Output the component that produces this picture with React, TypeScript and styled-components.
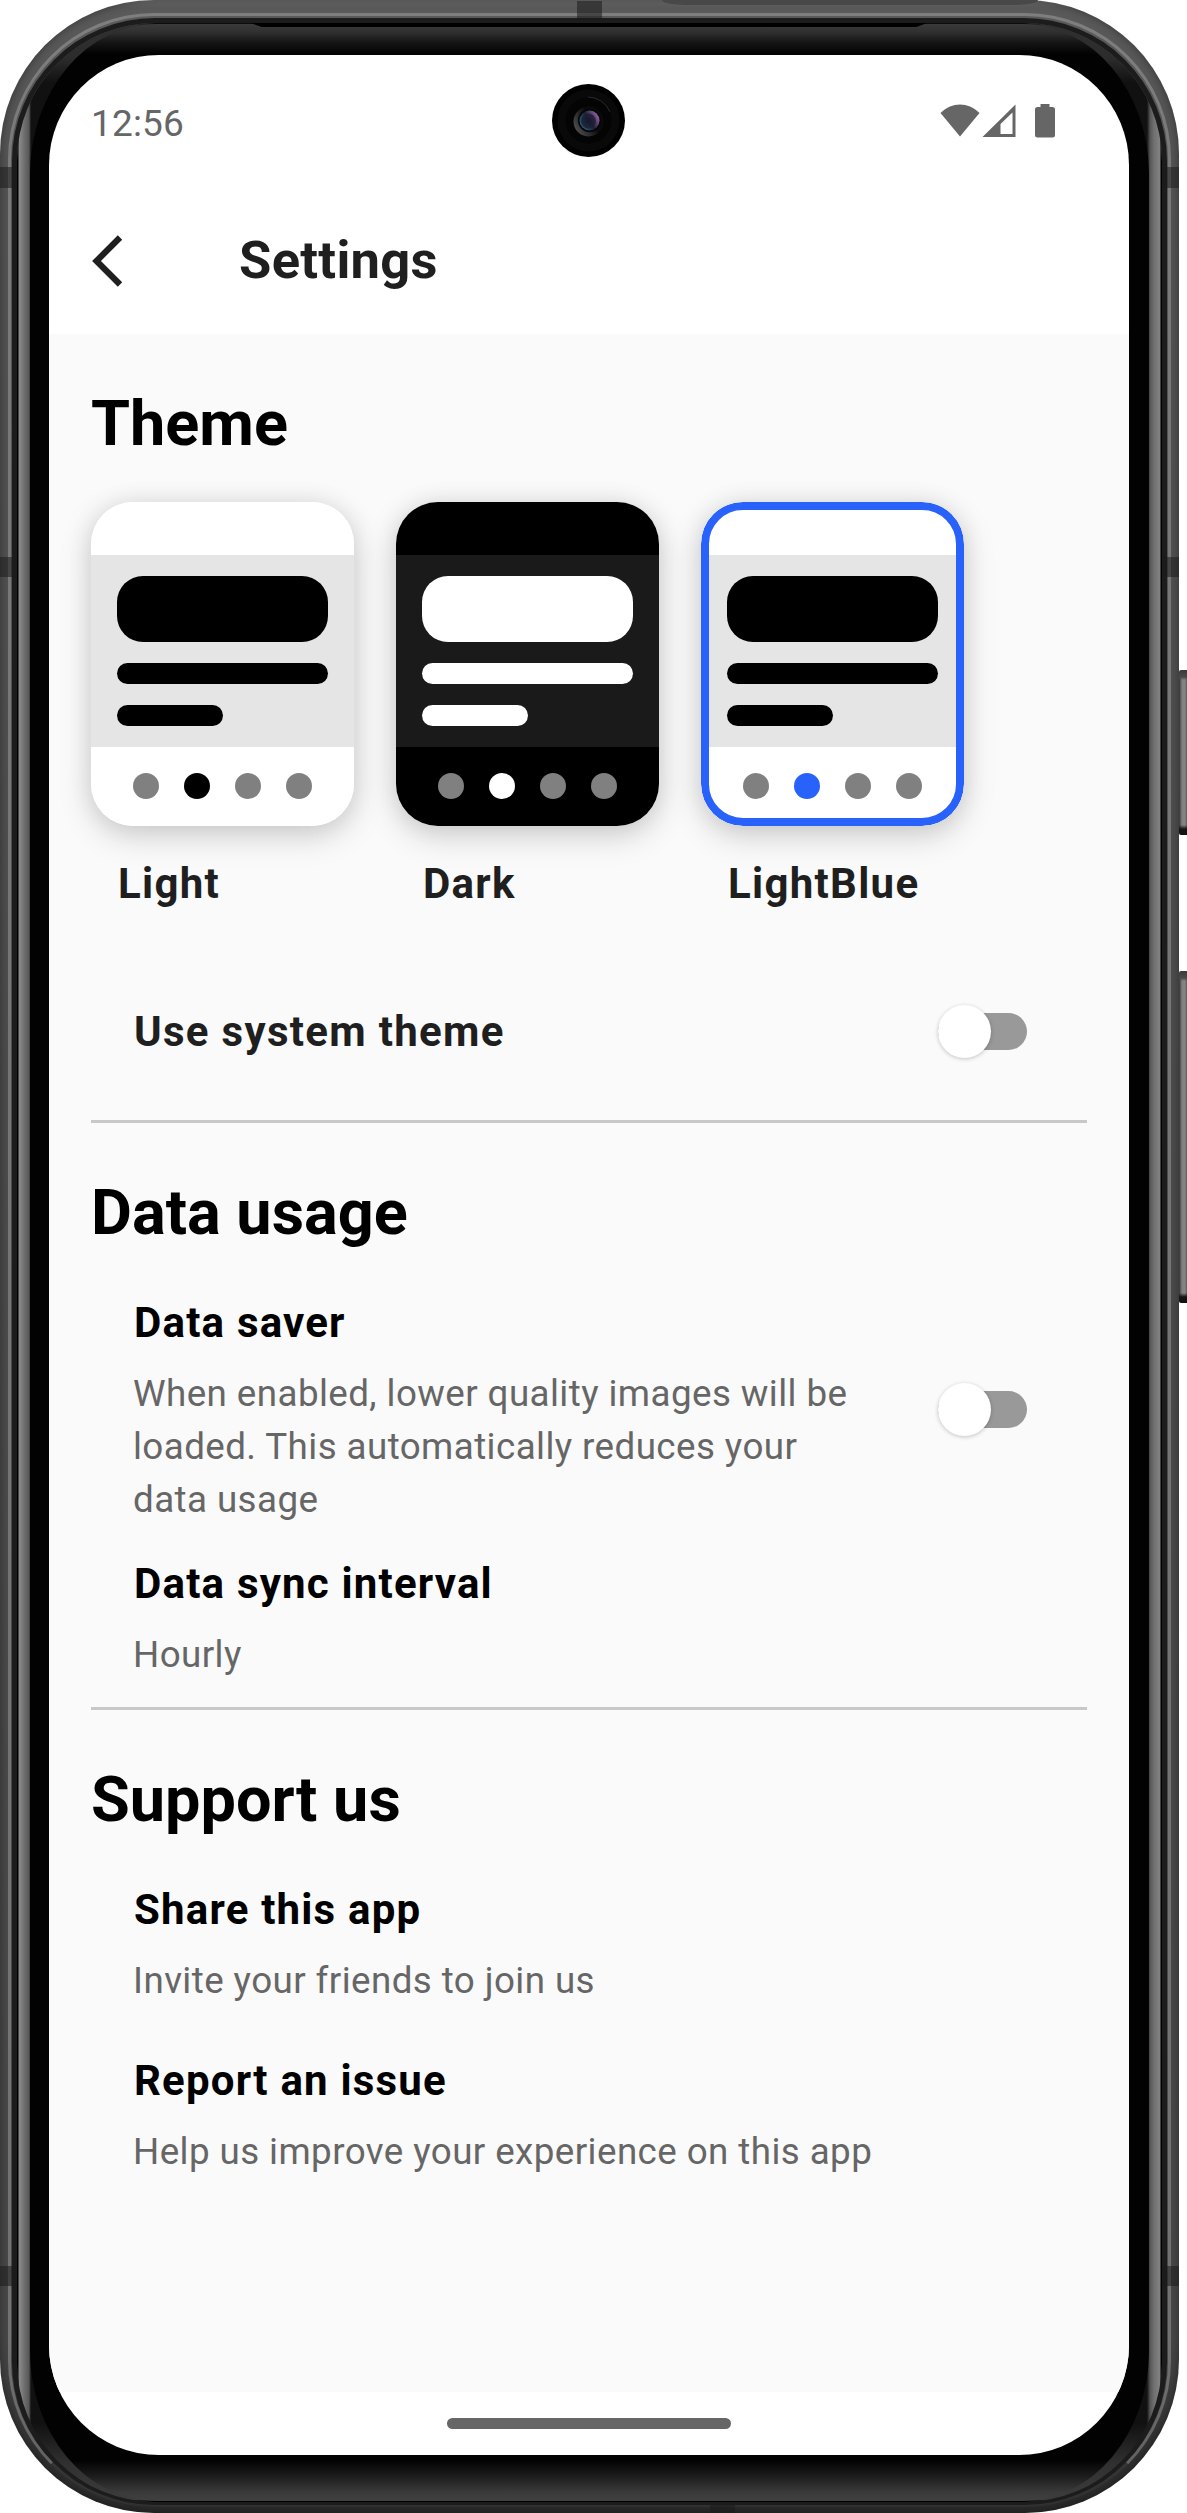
import React from "react";
import styled, { createGlobalStyle, css } from "styled-components";

const Global = createGlobalStyle`
  *, *::before, *::after { box-sizing: border-box; }
  html, body { margin: 0; background: #fff; }
  body { font-family: Roboto, "Liberation Sans", sans-serif; overflow: hidden; }
`;

const Stage = styled.main`
  width: 1187px;
  height: 2513px;
  position: relative;
  overflow: hidden;
`;

/* ---- device ---- */
const Shell = styled.div`
  position: relative;
  width: 1179px;
  height: 2513px;
  padding: 23px 17px 11px;
  border-radius: 154px;
  background: linear-gradient(180deg, #6e6e6e 0, #5a5a5a 8px, #555 120px, #4c4c4c 1200px, #484848 2340px, #303030 2460px, #2a2a2a 100%);
  box-shadow: inset 0 0 8px 1px rgba(0, 0, 0, 0.35);

  &::before {
    content: "";
    position: absolute;
    inset: 13px 8px 6px;
    border: 3px solid rgba(190, 190, 190, 0.36);
    border-bottom-color: rgba(120, 120, 120, 0.1);
    border-radius: 146px;
    filter: blur(0.5px);
  }

  &::after {
    content: "";
    position: absolute;
    inset: 18px 12px 8px;
    border: solid #1c1c1c;
    border-width: 5px 5px 3px;
    border-radius: 143px;
  }
`;

const Glass = styled.div`
  height: 2479px;
  padding: 1px 13px 1px;
  border-radius: 138px;
  background:
    linear-gradient(180deg, #000 0, #303030 2px, #2c2c2c 35px, transparent 60px, transparent 2400px, #303030 2440px, #3c3c3c 2477px, #000 2478px),
    linear-gradient(90deg, #000 0, #000 1px, #8c8c8c 2px, #707070 7px, #585858 12px, #111 14px, #111 1130px, #555 1133px, #707070 1137px, #828282 1143px, #000 1144px);
`;

const Bezel = styled.div`
  height: 2477px;
  padding: 31px 19px 44px;
  border-radius: 126px / 150px;
  background: linear-gradient(180deg, #3a3a3a 0, #303030 8px, #161616 18px, #020202 30px, #020202 2436px, #1c1c1c 2452px, #3a3a3a 2468px, #404040 100%);
`;

const Screen = styled.div`
  width: 1080px;
  height: 2400px;
  border-radius: 110px;
  overflow: hidden;
  display: flex;
  flex-direction: column;
  background: #fff;
`;

const Seam = styled.i<{ $x: number; $y: number; $w: number; $h: number }>`
  position: absolute;
  z-index: 1;
  left: ${(p) => p.$x}px;
  top: ${(p) => p.$y}px;
  width: ${(p) => p.$w}px;
  height: ${(p) => p.$h}px;
  background: rgba(28, 28, 28, 0.55);
`;

const Earpiece = styled.i`
  position: absolute;
  left: 248px;
  top: 22px;
  width: 682px;
  height: 5px;
  background: #000;
  clip-path: polygon(0 0, 100% 0, 98% 100%, 2% 100%);
`;

const TopBand = styled.i`
  position: absolute;
  left: 662px;
  top: 0;
  width: 376px;
  height: 5px;
  background: #484848;
  border-radius: 0 0 24px 24px / 0 0 5px 5px;
`;

const SideKey = styled.i<{ $y: number; $h: number }>`
  position: absolute;
  left: 1179px;
  top: ${(p) => p.$y}px;
  width: 8px;
  height: ${(p) => p.$h}px;
  border-radius: 2px 0 0 2px;
  background:
    linear-gradient(180deg, #3a3a3a 0, #4a4a4a 7px, transparent 10px, transparent calc(100% - 10px), #151515 calc(100% - 6px), #111 100%),
    linear-gradient(90deg, #333 0, #808080 3px, #858585 6px, #5a5a5a 8px);
`;

/* ---- status + app bar ---- */
const StatusBar = styled.header`
  position: relative;
  display: flex;
  justify-content: space-between;
  height: 136px;
  padding: 46px 73px 0 42px;
  color: #666;
`;

const Clock = styled.span`
  margin-top: 1px;
  font-size: 37px;
  line-height: 44px;
  letter-spacing: 0.15px;
`;

const StatusIcons = styled.svg`
  width: 116px;
  height: 36px;
  margin-top: 2px;
`;

const Camera = styled.div`
  position: absolute;
  left: 503px;
  top: 29px;
  width: 73px;
  height: 73px;
  border-radius: 50%;
  background: #000;
`;

const AppBar = styled.div`
  height: 143px;
  display: flex;
  align-items: center;
  padding: 0 42px 6px;
  gap: 116px;
`;

const BackIcon = styled.svg`
  width: 32px;
  height: 52px;
  margin-top: 3px;
`;

const AppTitle = styled.h1`
  margin: 0;
  font-size: 52.5px;
  line-height: 62px;
  font-weight: 700;
  letter-spacing: 0.3px;
  color: #1f1f1f;
`;

/* ---- content ---- */
const Content = styled.div`
  height: 2058px;
  padding: 0 42px;
  background: #fafafa;
`;

const Section = styled.section<{ $h: number; $line?: boolean }>`
  height: ${(p) => p.$h}px;
  padding-top: 53px;
  ${(p) => p.$line && css`border-bottom: 3px solid #c8c8c8;`}
`;

const Heading = styled.h2`
  margin: 0;
  font-size: 63px;
  line-height: 74px;
  font-weight: 700;
  color: #000;
`;

const ThemeList = styled.div`
  display: flex;
  gap: 42px;
  margin-top: 41px;
`;

const ThemeOption = styled.div`
  width: 263px;
`;

const Shade = styled.div`
  border-radius: 42px;
  box-shadow: 0 10px 32px rgba(0, 0, 0, 0.17), 0 0 24px rgba(0, 0, 0, 0.08);
`;

const Preview = styled.div<{ $bar: string; $ring?: string }>`
  position: relative;
  height: 324px;
  border-radius: 42px;
  overflow: hidden;
  background: ${(p) => p.$bar};
  ${(p) =>
    p.$ring &&
    css`
      &::after {
        content: "";
        position: absolute;
        inset: 0;
        border: 8px solid ${p.$ring};
        border-radius: 42px;
      }
    `}
`;

const PreviewBody = styled.div<{ $bg: string }>`
  height: 192px;
  margin-top: 53px;
  padding: 21px 26px;
  display: flex;
  flex-direction: column;
  gap: 21px;
  background: ${(p) => p.$bg};
`;

const Line = styled.div<{ $fg: string; $big?: boolean; $short?: boolean }>`
  width: ${(p) => (p.$short ? 106 : 211)}px;
  height: ${(p) => (p.$big ? 66 : 21)}px;
  border-radius: ${(p) => (p.$big ? 26 : 10.5)}px;
  background: ${(p) => p.$fg};
`;

const Dots = styled.div`
  height: 78px;
  padding: 0 42px;
  display: flex;
  align-items: center;
  justify-content: space-between;
`;

const Dot = styled.i<{ $c: string }>`
  width: 26px;
  height: 26px;
  border-radius: 50%;
  background: ${(p) => p.$c};
`;

const ThemeName = styled.div`
  margin: 32px 0 0 27px;
  font-size: 42px;
  line-height: 52px;
  font-weight: 700;
  letter-spacing: 1.3px;
  color: #1f1f1f;
`;

const Row = styled.div<{ $top: number }>`
  display: flex;
  justify-content: space-between;
  align-items: center;
  margin-top: ${(p) => p.$top}px;
  padding: 0 60px 0 42px;
`;

const RowTitle = styled.div<{ $soft?: boolean }>`
  padding-left: 1px;
  font-size: 42px;
  line-height: 52px;
  font-weight: 700;
  letter-spacing: ${(p) => (p.$soft ? 1.3 : 1.2)}px;
  color: ${(p) => (p.$soft ? "#1f1f1f" : "#000")};
`;

const RowNote = styled.p`
  margin: 18px 0 0;
  width: 744px;
  font-size: 36.75px;
  line-height: 53px;
  letter-spacing: 0.42px;
  color: #666;
`;

const Switch = styled.div<{ $lift?: number }>`
  position: relative;
  width: 89px;
  height: 53px;
  margin-bottom: ${(p) => p.$lift ?? 0}px;
  flex: none;
  display: flex;
  align-items: center;

  &::before {
    content: "";
    position: absolute;
    inset: 8px 0;
    border-radius: 19px;
    background: #999;
  }
`;

const Thumb = styled.i`
  position: relative;
  width: 53px;
  height: 53px;
  border-radius: 50%;
  background: #fff;
  box-shadow: 0 1px 4px rgba(0, 0, 0, 0.22);
`;

const NavBar = styled.footer`
  height: 63px;
  display: flex;
  justify-content: center;
  padding-top: 26px;
`;

const HomePill = styled.div`
  width: 284px;
  height: 11px;
  border-radius: 5.5px;
  background: #666;
`;

const themes = [
  { name: "Light", bar: "#fff", body: "#e5e5e5", fg: "#000", accent: "#000", ring: undefined },
  { name: "Dark", bar: "#000", body: "#1a1a1a", fg: "#fff", accent: "#fff", ring: undefined },
  { name: "LightBlue", bar: "#fff", body: "#e5e5e5", fg: "#000", accent: "#2962fb", ring: "#2962fb" },
];

const Lens = () => (
  <svg width="73" height="73" viewBox="0 0 73 73">
    <defs>
      <radialGradient id="iris" cx="0.5" cy="0.5" r="0.5">
        <stop offset="0" stopColor="#15152a" />
        <stop offset="1" stopColor="#1c2030" />
      </radialGradient>
      <linearGradient id="rim" x1="0" y1="0.8" x2="1" y2="0.2">
        <stop offset="0" stopColor="#2b6a80" />
        <stop offset="0.5" stopColor="#1c1f38" />
        <stop offset="1" stopColor="#a86bb5" />
      </linearGradient>
      <linearGradient id="flare" x1="0" y1="0.8" x2="1" y2="0.2">
        <stop offset="0" stopColor="#555" />
        <stop offset="0.6" stopColor="#0a0a0a" />
      </linearGradient>
    </defs>
    <circle cx="36.5" cy="36.5" r="31" fill="#090909" />
    <circle cx="36.5" cy="36.5" r="23" fill="#040404" />
    <path d="M36 13a24 24 0 0 1 22 15" fill="none" stroke="#2a2a2a" strokeWidth="1" />
    <circle cx="36.5" cy="37.5" r="15" fill="url(#flare)" />
    <circle cx="37.5" cy="36.5" r="11.5" fill="#050505" />
    <circle cx="37.5" cy="36.5" r="10" fill="url(#rim)" />
    <circle cx="36.5" cy="37" r="7.5" fill="url(#iris)" opacity="0.8" />
  </svg>
);

export default function App() {
  return (
    <Stage>
      <Global />
      <Shell>
        <Glass>
          <Bezel>
            <Screen>
              <StatusBar>
                <Clock>12:56</Clock>
                <Camera>
                  <Lens />
                </Camera>
                <StatusIcons viewBox="0 0 116 36" fill="#666">
                  <path d="M0.500 10C12.500 -1.300 27.500 -1.300 39.500 10L20 33.500Z" />
                  <path fillRule="evenodd" d="M42.500 34L75.500 1.500V34ZM60.500 31H72.500V9.500L60.500 21Z" />
                  <path d="M100.500 1h9v3h3q2.500 0 2.500 2.500V32q0 2.500-2.500 2.500H97.500q-2.500 0-2.500-2.500V6.500Q95 4 97.500 4h3Z" />
                </StatusIcons>
              </StatusBar>
              <AppBar>
                <BackIcon viewBox="0 0 32 52" fill="none" stroke="#1f1f1f" strokeWidth="6.200">
                  <path d="M29 2.500L5.500 26L29 49.500" />
                </BackIcon>
                <AppTitle>Settings</AppTitle>
              </AppBar>
              <Content>
                <Section $h={789} $line>
                  <Heading>Theme</Heading>
                  <ThemeList>
                    {themes.map((t) => (
                      <ThemeOption key={t.name}>
                        <Shade>
                          <Preview $bar={t.bar} $ring={t.ring}>
                            <PreviewBody $bg={t.body}>
                              <Line $fg={t.fg} $big />
                              <Line $fg={t.fg} />
                              <Line $fg={t.fg} $short />
                            </PreviewBody>
                            <Dots>
                              <Dot $c="#808080" />
                              <Dot $c={t.accent} />
                              <Dot $c="#808080" />
                              <Dot $c="#808080" />
                            </Dots>
                          </Preview>
                        </Shade>
                        <ThemeName>{t.name}</ThemeName>
                      </ThemeOption>
                    ))}
                  </ThemeList>
                  <Row $top={95}>
                    <RowTitle $soft>Use system theme</RowTitle>
                    <Switch>
                      <Thumb />
                    </Switch>
                  </Row>
                </Section>
                <Section $h={587} $line>
                  <Heading>Data usage</Heading>
                  <Row $top={47}>
                    <div>
                      <RowTitle>Data saver</RowTitle>
                      <RowNote>
                        When enabled, lower quality images will be loaded. This automatically reduces your data usage
                      </RowNote>
                    </div>
                    <Switch $lift={4}>
                      <Thumb />
                    </Switch>
                  </Row>
                  <Row $top={32}>
                    <div>
                      <RowTitle>Data sync interval</RowTitle>
                      <RowNote>Hourly</RowNote>
                    </div>
                  </Row>
                </Section>
                <Section $h={600}>
                  <Heading>Support us</Heading>
                  <Row $top={47}>
                    <div>
                      <RowTitle>Share this app</RowTitle>
                      <RowNote>Invite your friends to join us</RowNote>
                    </div>
                  </Row>
                  <Row $top={48}>
                    <div>
                      <RowTitle>Report an issue</RowTitle>
                      <RowNote>Help us improve your experience on this app</RowNote>
                    </div>
                  </Row>
                </Section>
              </Content>
              <NavBar>
                <HomePill />
              </NavBar>
            </Screen>
          </Bezel>
        </Glass>
        <TopBand />
        <Earpiece />
        <Seam $x={0} $y={167} $w={16} $h={21} />
        <Seam $x={1163} $y={167} $w={16} $h={21} />
        <Seam $x={0} $y={557} $w={16} $h={20} />
        <Seam $x={1163} $y={557} $w={16} $h={20} />
        <Seam $x={0} $y={2266} $w={16} $h={20} />
        <Seam $x={1163} $y={2266} $w={16} $h={20} />
        <Seam $x={577} $y={1} $w={25} $h={19} />
        <Seam $x={710} $y={2504} $w={25} $h={9} />
      </Shell>
      <SideKey $y={670} $h={165} />
      <SideKey $y={971} $h={332} />
    </Stage>
  );
}
